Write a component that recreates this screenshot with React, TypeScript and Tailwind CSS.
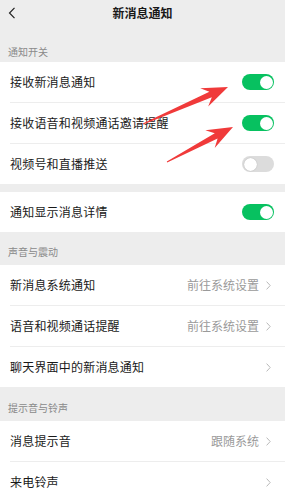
import React from "react";

/** One switch row / link row in the settings list. */
type Row =
  | { kind: "toggle"; label: string; on: boolean }
  | { kind: "link"; label: string; value?: string };

const FONT = { fontFamily: '"Noto Sans CJK SC", "Noto Sans", sans-serif' };

const SWITCHES: Row[] = [
  { kind: "toggle", label: "接收新消息通知", on: true },
  { kind: "toggle", label: "接收语音和视频通话邀请提醒", on: true },
  { kind: "toggle", label: "视频号和直播推送", on: false },
];

const SOUND_VIBRATE: Row[] = [
  { kind: "link", label: "新消息系统通知", value: "前往系统设置" },
  { kind: "link", label: "语音和视频通话提醒", value: "前往系统设置" },
  { kind: "link", label: "聊天界面中的新消息通知" },
];

const RINGTONES: Row[] = [
  { kind: "link", label: "消息提示音", value: "跟随系统" },
  { kind: "link", label: "来电铃声" },
];

function Toggle({ on }: { on: boolean }) {
  return (
    <div
      className={
        on
          ? "relative w-[32px] h-[16px] rounded-full bg-[#07c160]"
          : "relative w-[32px] h-[16px] rounded-full bg-[#dcdcdc]"
      }
    >
      <div
        className={
          on
            ? "absolute top-[1.5px] right-[1.5px] w-[13px] h-[13px] rounded-full bg-white"
            : "absolute top-[1.5px] left-[1.5px] w-[13px] h-[13px] rounded-full bg-white shadow-[0_0_1px_rgba(0,0,0,0.3)]"
        }
      />
    </div>
  );
}

function Chevron() {
  return (
    <svg width="5" height="9" viewBox="0 0 5 9" className="ml-[7px]">
      <path d="M0.6 0.6 L4.2 4.5 L0.6 8.4" fill="none" stroke="#b9b9b9" strokeWidth="1" />
    </svg>
  );
}

function List({ rows }: { rows: Row[] }) {
  return (
    <div className="bg-white">
      {rows.map((row, i) => (
        <div key={row.label}>
          {i > 0 && <div className="ml-[10px] border-t border-[#ededed]" />}
          <div className="flex items-center h-[40px] pl-[10px] pr-[11px]">
            <span className="flex-1 text-[12px] leading-[16px] text-[#191919] tracking-[0.2px]">
              {row.label}
            </span>
            {row.kind === "toggle" ? (
              <Toggle on={row.on} />
            ) : (
              <div className="flex items-center pr-[3px]">
                {row.value && (
                  <span className="text-[12px] leading-[16px] text-[#9a9a9a]">{row.value}</span>
                )}
                <Chevron />
              </div>
            )}
          </div>
        </div>
      ))}
    </div>
  );
}

/** Red annotation arrow drawn from tail to tip. */
function arrowPoints(tx: number, ty: number, hx: number, hy: number) {
  const dx = hx - tx;
  const dy = hy - ty;
  const len = Math.hypot(dx, dy);
  const ux = dx / len;
  const uy = dy / len;
  const nx = -uy;
  const ny = ux;
  const L = 26;
  const W = 20;
  const Lj = 19;
  const s = 3;
  const p = (x: number, y: number) => `${x.toFixed(1)},${y.toFixed(1)}`;
  const bx = hx - ux * L;
  const by = hy - uy * L;
  const jx = hx - ux * Lj;
  const jy = hy - uy * Lj;
  return [
    p(tx + nx * 0.5, ty + ny * 0.5),
    p(jx + nx * s, jy + ny * s),
    p(bx + nx * (W / 2), by + ny * (W / 2)),
    p(hx, hy),
    p(bx - nx * (W / 2), by - ny * (W / 2)),
    p(jx - nx * s, jy - ny * s),
    p(tx - nx * 0.5, ty - ny * 0.5),
  ].join(" ");
}

function Arrows() {
  return (
    <svg
      width="285"
      height="492"
      viewBox="0 0 285 492"
      className="absolute left-0 top-0 pointer-events-none"
    >
      <polygon points={arrowPoints(143, 124, 228, 87)} fill="#f03a3a" />
      <polygon points={arrowPoints(167, 162, 233, 127)} fill="#f03a3a" />
    </svg>
  );
}

function SectionLabel({ text, h }: { text: string; h: string }) {
  return (
    <div className={`flex items-end pl-[8px] pb-[6px] ${h}`}>
      <span className="text-[10px] leading-[14px] text-[#8a8a8a]">{text}</span>
    </div>
  );
}

export default function App() {
  return (
    <div className="relative w-[285px] h-[492px] overflow-hidden bg-[#ededed]" style={FONT}>
      {/* ---- Title bar ---- */}
      <div className="relative flex items-center justify-center h-[25px]">
        <svg width="8" height="12" viewBox="0 0 8 12" className="absolute left-[8px] top-[7px]">
          <path d="M6.5 0.8 L1.5 6 L6.5 11.2" fill="none" stroke="#222" strokeWidth="1.2" />
        </svg>
        <span className="text-[12px] leading-[16px] font-bold text-[#191919]">新消息通知</span>
      </div>

      <div className="flex items-end pl-[8px] pb-[3px] h-[37px]">
        <span className="text-[10px] leading-[14px] text-[#8a8a8a]">通知开关</span>
      </div>
      <List rows={SWITCHES} />

      <div className="h-[8px]" />
      <List rows={[{ kind: "toggle", label: "通知显示消息详情", on: true }]} />

      <SectionLabel text="声音与震动" h="h-[33px]" />
      <List rows={SOUND_VIBRATE} />

      <SectionLabel text="提示音与铃声" h="h-[34px]" />
      <List rows={RINGTONES} />

      <Arrows />
    </div>
  );
}
